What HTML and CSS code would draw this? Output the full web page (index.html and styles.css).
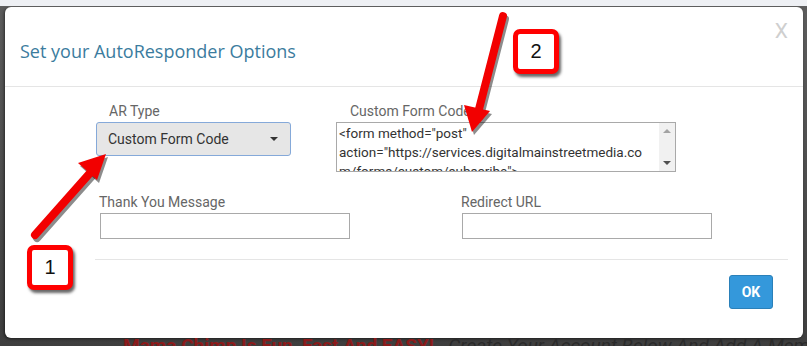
FILE: index.html
```html
<!DOCTYPE html>
<html lang="en">
<head>
  <meta charset="UTF-8" />
  <title>AutoResponder Options</title>
  <link rel="stylesheet" href="styles.css">
</head>
<body>
  <div class="top-strip"></div>

  <div class="backdrop">
    <div class="modal">
      <div class="modal-header">
        <h4 class="modal-title">Set your AutoResponder Options</h4>
        <span class="close">X</span>
      </div>

      <div class="modal-body">
        <div class="row row-top">
          <div class="field field-type">
            <label>AR Type</label>
            <div class="select">
              <span>Custom Form Code</span>
              <span class="caret"></span>
            </div>
          </div>
          <div class="field field-code">
            <label>Custom Form Code</label>
            <div class="code-box">
              <textarea readonly>&lt;form method="post" action="https://services.digitalmainstreetmedia.com/forms/custom/subscribe"&gt;</textarea>
              <div class="scroll">
                <span class="arrow up"></span>
                <span class="arrow down"></span>
              </div>
            </div>
          </div>
        </div>

        <div class="row row-bottom">
          <div class="field field-thanks">
            <label>Thank You Message</label>
            <input type="text" />
          </div>
          <div class="field field-redirect">
            <label>Redirect URL</label>
            <input type="text" />
          </div>
        </div>
      </div>

      <div class="modal-footer">
        <button class="btn-ok">OK</button>
      </div>
    </div>

    <div class="page-text">
      <strong>Mama Chimp Is Fun, Fast And EASY!</strong>
      <em> - Create Your Account Below And Add A Memo To Your Site</em>
    </div>
  </div>

  <!-- annotation overlay -->
  <svg class="arrows" width="807" height="346" viewBox="0 0 807 346">
    <g class="shadow">
      <line x1="37" y1="238" x2="92" y2="176" />
      <polygon points="108,157 80,166 99,183" />
      <line x1="505" y1="19" x2="480" y2="116" />
      <polygon points="474,135 466,108 492,114" />
    </g>
    <g class="red">
      <line x1="35" y1="235" x2="90" y2="173" />
      <polygon points="106,154 78,163 97,180" />
      <line x1="503" y1="16" x2="478" y2="113" />
      <polygon points="472,132 464,105 490,111" />
    </g>
  </svg>
  <div class="callout callout-1">1</div>
  <div class="callout callout-2">2</div>
</body>
</html>
```

FILE: styles.css
```css
body {
  margin: 0;
  width: 807px;
  height: 346px;
  overflow: hidden;
  position: relative;
  font-family: Roboto, "Liberation Sans", sans-serif;
  background: #4b4b4b;
}

.top-strip {
  height: 6px;
  background: #eef0f4;
  border-bottom: 1px solid #5e5e5e;
}

.backdrop {
  background: linear-gradient(to bottom, #5c5c5c, #3e3e3e);
  padding-left: 5px;
  height: 339px;
  overflow: hidden;
}

.modal {
  width: 798px;
  height: 331px;
  background: #fff;
  border-radius: 6px;
  box-shadow: -1px 1px 3px rgba(0, 0, 0, 0.5);
  box-sizing: border-box;
}

.modal-header {
  height: 80px;
  border-bottom: 1px solid #e5e5e5;
  box-sizing: border-box;
  display: flex;
  justify-content: space-between;
  padding: 0 15px 0 15px;
}

.modal-title {
  margin: 0;
  padding-top: 32px;
  font-family: "Open Sans", sans-serif;
  font-weight: normal;
  font-size: 18px;
  color: #3b7c9e;
}

.close {
  padding-top: 12px;
  font-size: 21px;
  color: #cfcfcf;
}

.modal-body {
  padding-top: 16px;
}

.row {
  display: flex;
}

.row-top {
  padding-left: 91px;
  gap: 45px;
}

.row-bottom {
  padding-left: 94px;
  gap: 111px;
  margin-top: 22px;
}

.field label {
  display: block;
  font-size: 14px;
  color: #666;
  line-height: 17px;
  margin-bottom: 2px;
}

.field-type label {
  padding-left: 13px;
}

.field-code label {
  padding-left: 14px;
}

.select {
  width: 195px;
  height: 34px;
  box-sizing: border-box;
  background: #e6e6e6;
  border: 1px solid #85a9d9;
  border-radius: 3px;
  display: flex;
  align-items: center;
  justify-content: space-between;
  padding: 0 12px 0 11px;
  font-size: 14px;
  color: #333;
}

.caret {
  border-left: 4px solid transparent;
  border-right: 4px solid transparent;
  border-top: 4px solid #333;
}

.code-box {
  width: 340px;
  height: 50px;
  box-sizing: border-box;
  border: 1px solid #a9a9a9;
  display: flex;
}

.code-box textarea {
  flex: 1;
  border: none;
  resize: none;
  overflow: hidden;
  padding: 1px 10px 1px 2px;
  margin: 0;
  font-family: Roboto, "Liberation Sans", sans-serif;
  font-size: 13.5px;
  line-height: 19px;
  color: #333;
  outline: none;
}

.scroll {
  width: 16px;
  background: #f1f1f1;
  display: flex;
  flex-direction: column;
  justify-content: space-between;
  align-items: center;
  padding: 6px 0;
}

.arrow {
  border-left: 4px solid transparent;
  border-right: 4px solid transparent;
}

.arrow.up {
  border-bottom: 4px solid #a3a3a3;
}

.arrow.down {
  border-top: 4px solid #505050;
}

.field input {
  display: block;
  width: 250px;
  height: 26px;
  box-sizing: border-box;
  border: 1px solid #a9a9a9;
  margin: 0 0 0 1px;
}

.modal-footer {
  margin: 20px 15px 0 90px;
  border-top: 1px solid #e5e5e5;
  padding-top: 15px;
  display: flex;
  justify-content: flex-end;
  padding-right: 15px;
}

.btn-ok {
  width: 44px;
  height: 34px;
  background: #3498db;
  border: 1px solid #2a80b9;
  border-radius: 3px;
  color: #fff;
  font-family: Roboto, sans-serif;
  font-weight: bold;
  font-size: 14px;
}

.page-text {
  padding-left: 118px;
  margin-top: -3px;
  font-size: 19px;
  line-height: 22px;
  white-space: nowrap;
}

.page-text strong {
  color: #8b1a1a;
}

.page-text em {
  color: #2a2a2a;
}

.arrows {
  position: absolute;
  left: 0;
  top: 0;
}

.arrows line {
  stroke-width: 8;
  stroke-linecap: round;
}

.arrows .shadow line {
  stroke: rgba(0, 0, 0, 0.45);
}

.arrows .shadow polygon {
  fill: rgba(0, 0, 0, 0.45);
}

.arrows .red line {
  stroke: #f20000;
}

.arrows .red polygon {
  fill: #f20000;
}

.callout {
  position: absolute;
  width: 46px;
  height: 45px;
  box-sizing: border-box;
  border: 5px solid #f00;
  border-radius: 7px;
  background: #fff;
  box-shadow: 2px 3px 3px rgba(0, 0, 0, 0.6);
  font-family: "Liberation Sans", Arial, sans-serif;
  font-size: 20px;
  color: #111;
  display: flex;
  align-items: center;
  justify-content: center;
}

.callout-1 {
  left: 27px;
  top: 245px;
}

.callout-2 {
  left: 513px;
  top: 29px;
}
```
